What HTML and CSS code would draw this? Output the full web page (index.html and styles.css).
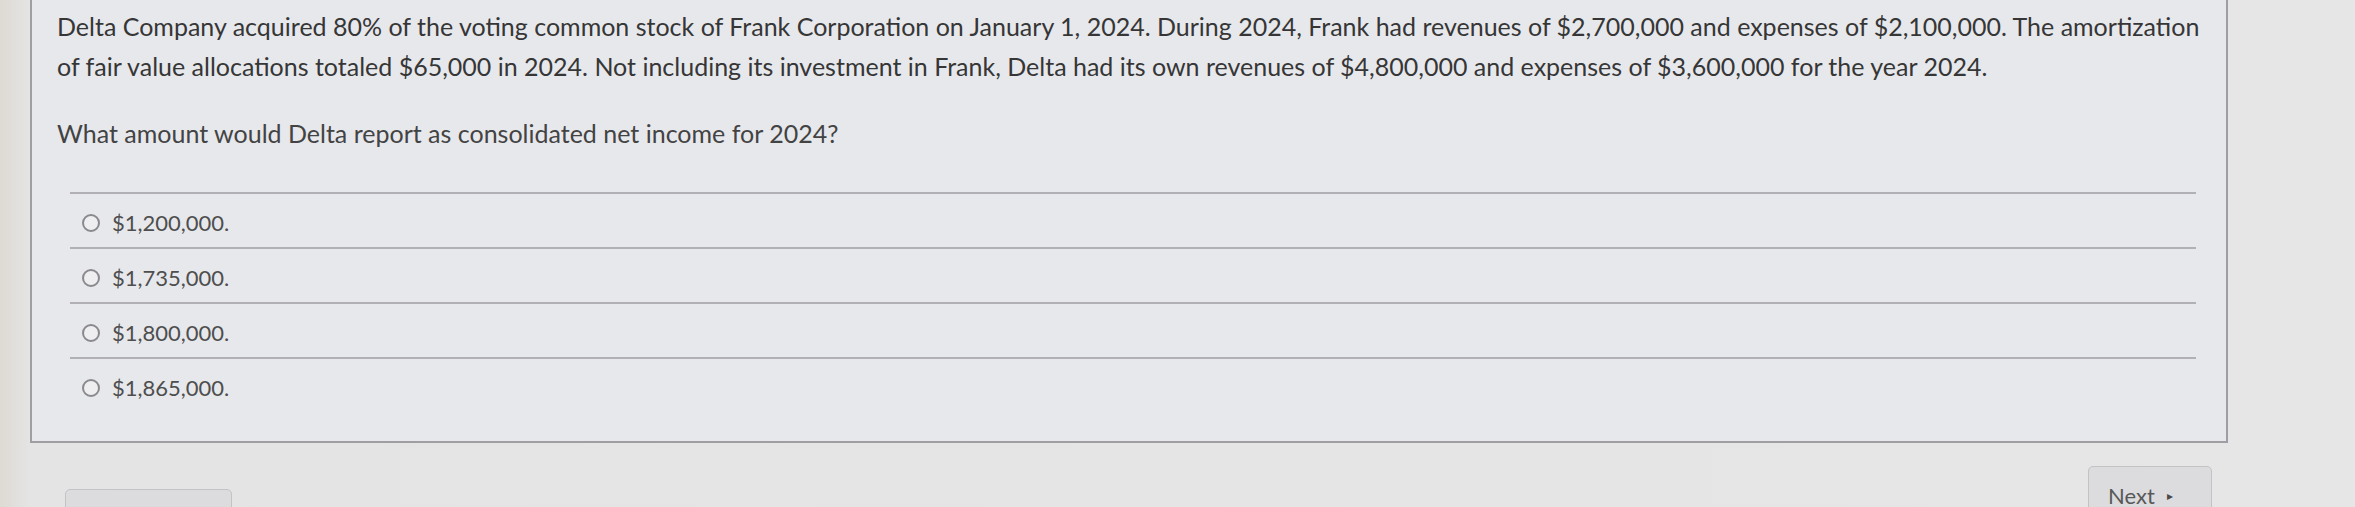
FILE: index.html
```html
<!DOCTYPE html>
<html lang="en">
<head>
<meta charset="utf-8">
<title>Quiz question</title>
<link rel="stylesheet" href="styles.css">
</head>
<body>
<div class="stage">
  <div class="card">
    <div class="question-text">
      <p class="stem">Delta Company acquired 80% of the voting common stock of Frank Corporation on January 1, 2024. During 2024, Frank had revenues of $2,700,000 and expenses of $2,100,000. The amortization of fair value allocations totaled $65,000 in 2024. Not including its investment in Frank, Delta had its own revenues of $4,800,000 and expenses of $3,600,000 for the year 2024.</p>
      <p class="ask">What amount would Delta report as consolidated net income for 2024?</p>
    </div>
    <div class="answers">
      <label class="answer"><span class="radio"></span><span class="answer-text">$1,200,000.</span></label>
      <label class="answer"><span class="radio"></span><span class="answer-text">$1,735,000.</span></label>
      <label class="answer"><span class="radio"></span><span class="answer-text">$1,800,000.</span></label>
      <label class="answer"><span class="radio"></span><span class="answer-text">$1,865,000.</span></label>
    </div>
  </div>
  <div class="footer">
    <button class="btn prev" type="button"></button>
    <button class="btn next" type="button">Next <span class="caret">&#9656;</span></button>
  </div>
</div>
</body>
</html>
```

FILE: styles.css
```css
html, body {
  margin: 0;
  padding: 0;
}
body {
  width: 2355px;
  height: 507px;
  overflow: hidden;
  background: linear-gradient(to right, #dedad4 0px, #e4e4e4 30px, #e6e6e6 100%);
  font-family: Lato, "Open Sans", "Liberation Sans", sans-serif;
  color: #383838;
}
.stage {
  display: flex;
  flex-direction: column;
}
.card {
  box-sizing: border-box;
  margin-left: 30px;
  width: 2198px;
  background: #e7e8ec;
  border: 2px solid #9e9ea3;
  border-top: none;
  padding: 6px 0 29px 25px;
}
.question-text {
  padding-right: 26px;
}
.stem {
  margin: 0;
  font-size: 25px;
  line-height: 40px;
  color: #363636;
}
.ask {
  margin: 27px 0 0 0;
  font-size: 25px;
  line-height: 40px;
  color: #434343;
}
.answers {
  margin: 39px 30px 0 13px;
  display: flex;
  flex-direction: column;
}
.answer {
  display: flex;
  align-items: center;
  border-top: 2px solid #b0b0b5;
  padding: 19px 0 14px 12px;
  height: 20px;
}
.radio {
  box-sizing: border-box;
  width: 18px;
  height: 18px;
  border: 2px solid #8a8a8e;
  border-radius: 50%;
  background: #eeeef0;
  flex: none;
}
.answer-text {
  margin-left: 12px;
  font-size: 22px;
  line-height: 20px;
  color: #4e4e4e;
}
.footer {
  display: flex;
  justify-content: space-between;
  align-items: flex-start;
  margin: 23px 143px 0 65px;
}
.btn {
  box-sizing: border-box;
  background: #dcdcdf;
  border: 1px solid #c3c3c6;
  border-radius: 5px;
  font-family: Lato, "Open Sans", "Liberation Sans", sans-serif;
}
.prev {
  width: 167px;
  height: 40px;
  margin-top: 23px;
}
.next {
  width: 124px;
  height: 56px;
  padding: 16px 0 0 19px;
  text-align: left;
  font-size: 22px;
  line-height: 26px;
  color: #585858;
  display: flex;
  align-items: flex-start;
}
.caret {
  font-size: 12px;
  margin-left: 12px;
  line-height: 26px;
  color: #4a4a4a;
}
```
